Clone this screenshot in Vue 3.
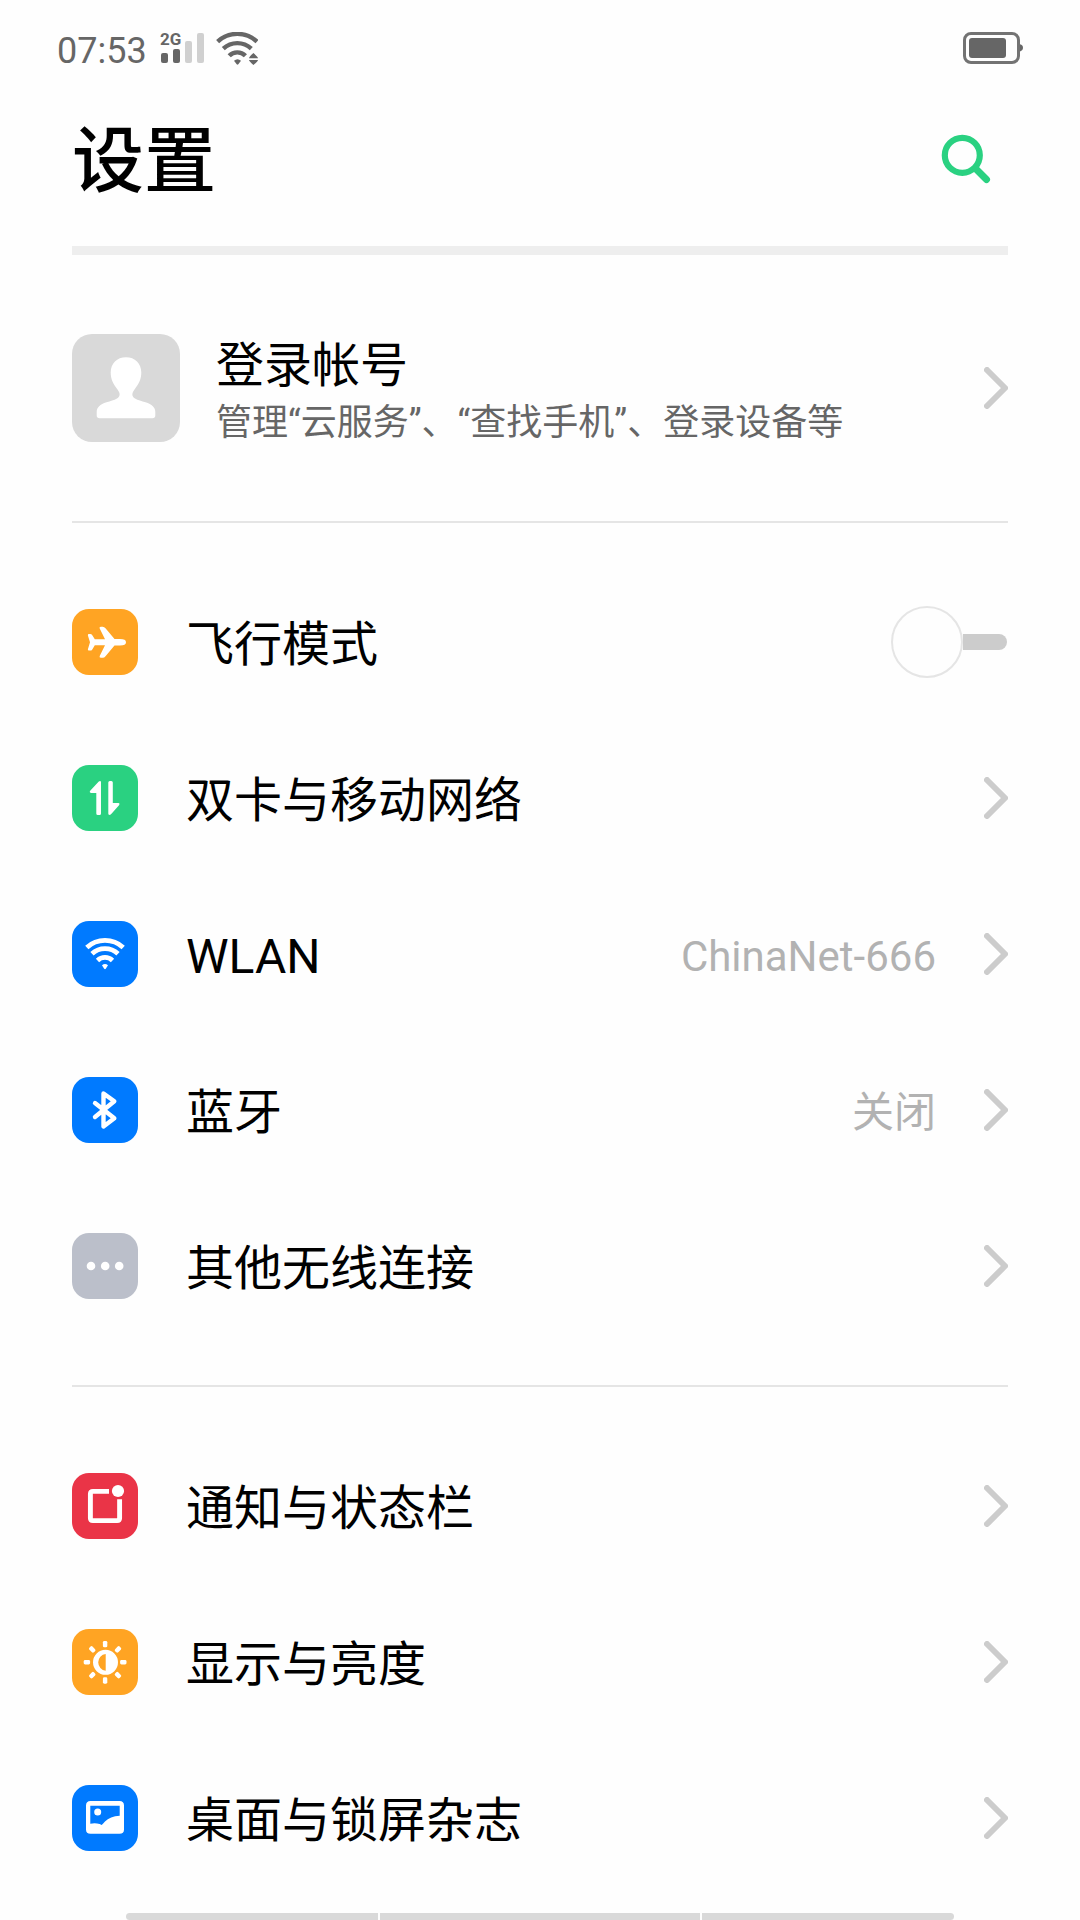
<script setup>
import { ref } from 'vue'

const airplaneMode = ref(false)

const connections = [
  { id: 'sim', label: '双卡与移动网络', color: 'green' },
  { id: 'wlan', label: 'WLAN', color: 'blue', value: 'ChinaNet-666' },
  { id: 'bluetooth', label: '蓝牙', color: 'blue', value: '关闭' },
  { id: 'more', label: '其他无线连接', color: 'gray' }
]

const display = [
  { id: 'notification', label: '通知与状态栏', color: 'red' },
  { id: 'brightness', label: '显示与亮度', color: 'orange' },
  { id: 'wallpaper', label: '桌面与锁屏杂志', color: 'blue' }
]

const sections = [
  { id: 'connections', rows: connections },
  { id: 'display', rows: display }
]

const rayAngles = [0, 45, 90, 135, 180, 225, 270, 315]
</script>

<template>
  <div class="screen">
    <div class="status-bar">
      <div class="status-left">
        <span class="time">07:53</span>
        <svg class="signal" viewBox="0 -8 45 49" aria-hidden="true">
          <text class="network" x="0" y="13">2G</text>
          <rect x="1" y="21" width="7" height="10" rx="2" fill="#666" />
          <rect x="13" y="17" width="7" height="14" rx="2" fill="#666" />
          <rect x="25" y="9" width="7" height="22" rx="2" fill="#d0d0d0" />
          <rect x="37" y="1" width="7" height="30" rx="2" fill="#d0d0d0" />
        </svg>
        <svg class="wifi" viewBox="0 0 42 33" aria-hidden="true">
          <g fill="none" stroke="#666" stroke-width="4.4">
            <path d="M1.6 9.6A29 29 0 0 1 41 9.6" />
            <path d="M7.3 16.6A20.7 20.7 0 0 1 35.3 16.6" />
            <path d="M13.2 23.8A11.2 11.2 0 0 1 29.4 23.8" />
          </g>
          <path d="M18 28.8Q21.5 25.6 25 28.8L22.3 32.3Q21.5 33 20.7 32.3Z" fill="#666" />
          <path d="M33 26.2Q33 25 37.4 21Q42 25 42 26.2ZM33 28Q33 29.2 37.4 33Q42 29.2 42 28Z" fill="#666" />
        </svg>
      </div>
      <svg class="battery" viewBox="0 0 60 32" aria-hidden="true">
        <rect x="1.5" y="1.5" width="54" height="29" rx="6.5" fill="none" stroke="#737373" stroke-width="3" />
        <rect x="6" y="6" width="37" height="20" rx="3" fill="#666" />
        <path d="M57 12.2Q60 13 60 15.8Q60 18.6 57 19.4Z" fill="#666" />
      </svg>
    </div>

    <header class="header">
      <h1 class="title">设置</h1>
      <button class="search" type="button" aria-label="搜索">
        <svg viewBox="0 0 50 50">
          <circle cx="21.3" cy="21.3" r="17.5" fill="none" stroke="#2ad181" stroke-width="6.2" />
          <path d="M35 35L45.5 45.5" stroke="#2ad181" stroke-width="7" stroke-linecap="round" />
        </svg>
      </button>
    </header>

    <main class="content">
      <button class="account" type="button">
        <svg class="avatar" viewBox="0 0 108 108" aria-hidden="true">
          <path
            d="M54 23.3C63 23.3 69.3 29.5 69.3 38.5C69.3 45 67 49.5 62.5 55.5C59.5 59.5 59.7 62.5 63 64.5C66 66.3 69.5 67 73.5 68.3C80 70.5 83.3 73.5 83.3 78V81.5Q83.3 84.3 80.3 84.3H27.7Q24.7 84.3 24.7 81.5V78C24.7 73.5 28 70.5 34.5 68.3C38.5 67 42 66.3 45 64.5C48.3 62.5 48.5 59.5 45.5 55.5C41 49.5 38.7 45 38.7 38.5C38.7 29.5 45 23.3 54 23.3Z"
            fill="#fff"
          />
        </svg>
        <span class="account-text">
          <span class="account-name">登录帐号</span>
          <span class="account-note">管理“云服务”、“查找手机”、登录设备等</span>
        </span>
        <svg class="chevron" viewBox="0 0 24 42" aria-hidden="true"><path d="M3 3L21 21L3 39" /></svg>
      </button>

      <section v-for="section in sections" :key="section.id" class="section">
        <label v-if="section.id === 'connections'" class="row">
          <svg class="tile orange" viewBox="0 0 66 66" aria-hidden="true">
            <path
              d="M54 33.2Q54 30 48 30H42.5L33.5 19.2Q32.3 17.7 30.7 17.7H28.8Q27 17.7 27.7 19.4L33 30.3H22.8L20.3 26.2Q19.5 25 18.2 25H17Q15.6 25 15.9 26.4L18 33.2L15.9 40.2Q15.6 41.6 17 41.6H18.2Q19.5 41.6 20.3 40.4L22.8 36.2H33L27.7 47Q27 48.7 28.8 48.7H30.7Q32.3 48.7 33.5 47.2L42.5 36.4H48Q54 36.4 54 33.2Z"
              fill="#fff"
            />
          </svg>
          <span class="label">飞行模式</span>
          <input v-model="airplaneMode" class="switch" type="checkbox" role="switch" />
        </label>

        <button v-for="row in section.rows" :key="row.id" class="row" type="button">
          <svg class="tile" :class="row.color" viewBox="0 0 66 66" aria-hidden="true">
            <g v-if="row.id === 'sim'" fill="#fff">
              <path d="M26.8 16.4Q29 15.2 29 17.4V48.5Q29 50 27.5 50H25.8Q24.3 50 24.3 48.5V28H19Q16.8 27.6 18.4 25.6Z" />
              <path d="M38.8 49.6Q36.3 50.8 36.3 48.6V17.5Q36.3 16 37.8 16H39.3Q40.8 16 40.8 17.5V38H46.3Q48.4 38.4 46.8 40.4Z" />
            </g>
            <g v-else-if="row.id === 'wlan'">
              <g fill="none" stroke="#fff" stroke-width="4.8">
                <path d="M14.8 26.5A27 27 0 0 1 51.2 26.5" />
                <path d="M20 32.8A19 19 0 0 1 46 32.8" />
                <path d="M25.5 39.4A11 11 0 0 1 40.5 39.4" />
              </g>
              <path d="M30 44.2Q33 41.6 36 44.2L33.8 47.7Q33 48.6 32.2 47.7Z" fill="#fff" />
            </g>
            <path
              v-else-if="row.id === 'bluetooth'"
              d="M23 26L42.3 41.3L31.5 49.5V16.5L42.3 24.3L23 40"
              fill="none"
              stroke="#fff"
              stroke-width="4.4"
              stroke-linecap="round"
              stroke-linejoin="round"
            />
            <g v-else-if="row.id === 'more'" fill="#fff">
              <circle cx="19" cy="33" r="4.3" />
              <circle cx="33.2" cy="33" r="4.3" />
              <circle cx="47.2" cy="33" r="4.3" />
            </g>
            <g v-else-if="row.id === 'notification'">
              <path d="M37 18.4H20.9Q18.4 18.4 18.4 20.9V45.1Q18.4 47.6 20.9 47.6H45.1Q47.6 47.6 47.6 45.1V26.3" fill="none" stroke="#fff" stroke-width="4.9" />
              <circle cx="46" cy="18" r="6.1" fill="#fff" />
            </g>
            <g v-else-if="row.id === 'brightness'" fill="#fff">
              <rect
                v-for="angle in rayAngles"
                :key="angle"
                x="30.9"
                y="11.9"
                width="4.4"
                height="6.4"
                rx="1.4"
                :transform="`rotate(${angle} 33.1 33.3)`"
              />
              <path fill-rule="evenodd" d="M33.5 20.8A12.5 12.5 0 0 1 33.5 45.8A12.5 12.5 0 0 1 33.5 20.8ZM33.7 25A8.4 8.4 0 0 0 33.7 41.7Z" />
            </g>
            <path
              v-else
              fill="#fff"
              fill-rule="evenodd"
              d="M18.5 16H47.5Q52 16 52 20.5V44.5Q52 48.8 47.5 48.8H18.5Q14 48.8 14 44.5V20.5Q14 16 18.5 16ZM18.3 20.7V38.7Q22 37.8 25 38.4Q28 38.6 29.7 40Q31 38.7 33 36.5Q38 31.3 47.7 30.7V20.7ZM25.7 23.6A3.5 3.5 0 0 1 25.7 30.6A3.5 3.5 0 0 1 25.7 23.6Z"
            />
          </svg>
          <span class="label">{{ row.label }}</span>
          <span v-if="row.value" class="value">{{ row.value }}</span>
          <svg class="chevron" viewBox="0 0 24 42" aria-hidden="true"><path d="M3 3L21 21L3 39" /></svg>
        </button>
      </section>
    </main>

    <nav class="gesture-bar" aria-label="导航手势">
      <span class="side"></span>
      <span class="middle"></span>
      <span class="side"></span>
    </nav>
  </div>
</template>

<style>
body {
  margin: 0;
  background: #fefefe;
}
</style>

<style scoped>
.screen {
  font-family: Roboto, "Noto Sans CJK SC", sans-serif;
  color: #000;
  background: #fefefe;
}

button {
  padding: 0;
  border: 0;
  background: none;
  color: inherit;
  font: inherit;
  text-align: left;
  cursor: pointer;
}

svg {
  display: block;
  flex: none;
}

.status-bar {
  display: flex;
  align-items: center;
  justify-content: space-between;
  height: 96px;
  padding: 0 57px;
}

.status-left {
  display: flex;
  align-items: center;
}

.time {
  padding-top: 6px;
  color: #666;
  font-size: 36px;
  line-height: 42px;
}

.signal {
  width: 45px;
  height: 49px;
  margin: 0 11px 0 13px;
}

.network {
  fill: #666;
  font-size: 17px;
  font-weight: 700;
}

.wifi {
  width: 42px;
  height: 33px;
}

.battery {
  width: 60px;
  height: 32px;
}

.header {
  display: flex;
  align-items: center;
  justify-content: space-between;
  height: 126px;
  margin: 0 72px;
  padding-bottom: 24px;
  border-bottom: 9px solid #eee;
}

.title {
  margin: 0;
  padding-top: 6px;
  font-size: 72px;
  font-weight: 500;
  line-height: 96px;
}

.search {
  margin-right: 17px;
}

.search svg {
  width: 50px;
  height: 50px;
}

.content {
  margin: 0 72px;
}

.account {
  display: flex;
  align-items: center;
  width: 100%;
  min-height: 266px;
}

.avatar {
  width: 108px;
  height: 108px;
  border-radius: 20px;
  background: #d9d9d9;
}

.account-text {
  display: flex;
  flex: 1;
  flex-direction: column;
  min-width: 0;
  margin-left: 36px;
  padding-top: 10px;
}

.account-name {
  font-size: 48px;
  line-height: 60px;
}

.account-note {
  color: #666;
  font-size: 36px;
  line-height: 54px;
}

.section {
  padding: 41px 0;
  border-top: 2px solid #e5e5e5;
}

.section:last-child {
  padding-bottom: 0;
}

.row {
  display: flex;
  align-items: center;
  width: 100%;
  height: 156px;
  cursor: pointer;
}

.tile {
  width: 66px;
  height: 66px;
  border-radius: 17px;
}

.orange {
  background: #ffa423;
}

.green {
  background: #2ad181;
}

.blue {
  background: #007aff;
}

.gray {
  background: #bbbfca;
}

.red {
  background: #ea3447;
}

.label {
  flex: 1;
  margin-left: 48px;
  padding-top: 5px;
  font-size: 48px;
  line-height: 60px;
}

.value {
  margin-right: 48px;
  padding-top: 5px;
  color: #b2b2b2;
  font-size: 42px;
  line-height: 60px;
}

.chevron {
  width: 24px;
  height: 42px;
  fill: none;
  stroke: #ccc;
  stroke-width: 6;
  stroke-linecap: round;
  stroke-linejoin: round;
}

.switch {
  display: flex;
  align-items: center;
  width: 117px;
  height: 72px;
  margin: 0;
  appearance: none;
  cursor: pointer;
}

.switch::before {
  box-sizing: border-box;
  width: 72px;
  height: 72px;
  border: 2px solid #e5e5e5;
  border-radius: 50%;
  background: #fefefe;
  content: "";
}

.switch::after {
  flex: 1;
  height: 16px;
  margin-right: 1px;
  border-radius: 0 8px 8px 0;
  background: #ccc;
  content: "";
}

.switch:checked {
  flex-direction: row-reverse;
}

.switch:checked::after {
  margin: 0 0 0 1px;
  border-radius: 8px 0 0 8px;
  background: #2ad181;
}

.gesture-bar {
  display: flex;
  gap: 2px;
  margin: 17px 126px 0;
}

.side,
.middle {
  height: 7px;
  background: #d9d9d9;
}

.side {
  flex: 252;
}

.middle {
  flex: 320;
}

.side:first-child {
  border-radius: 4px 0 0 4px;
}

.side:last-child {
  border-radius: 0 4px 4px 0;
}
</style>
